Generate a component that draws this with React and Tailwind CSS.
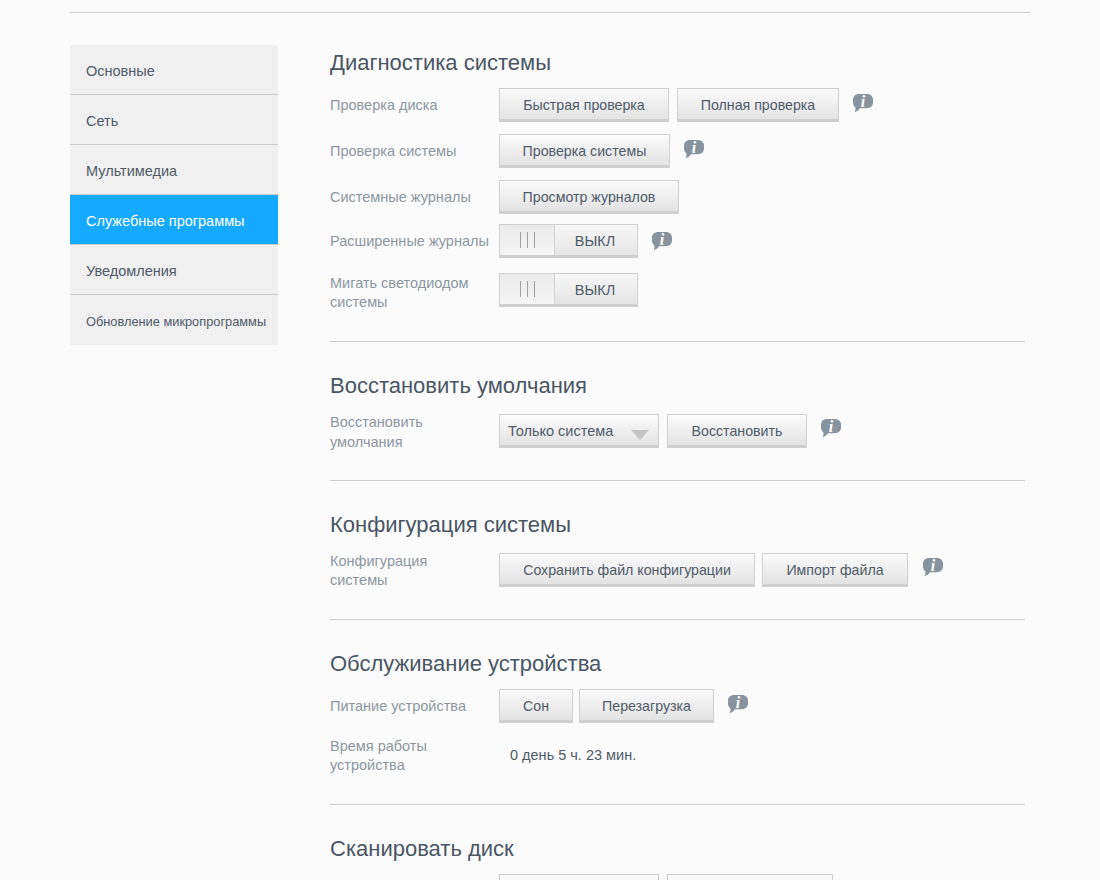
import React from 'react';

const NAV = [
    { label: 'Основные' },
    { label: 'Сеть' },
    { label: 'Мультимедиа' },
    { label: 'Служебные программы', active: true },
    { label: 'Уведомления' },
    { label: 'Обновление микропрограммы', small: true },
];

function InfoIcon({ className = '' }) {
    return (
        <svg width="20" height="19" viewBox="0 0 20 19" className={`overflow-visible ${className}`}>
            <path d="M6 0H14C17.5 0 20 2.4 20 5.5V8.5C20 11.8 17.5 14.2 14 14.2H7C5.8 16 4 17.6 1.5 18.2C2.4 16.8 2.6 15.2 2.4 13.4C0.9 12.2 0 10.4 0 8.5V5.5C0 2.4 2.5 0 6 0Z" fill="#8794a0" />
            <text x="10" y="12.5" textAnchor="middle" fontFamily="'Liberation Serif', serif" fontSize="16" fontWeight="700" fontStyle="italic" fill="#ffffff">i</text>
        </svg>
    );
}

function Btn({ children, className = '' }) {
    return (
        <button className={`h-[34px] pt-[4px] border border-[#cfcfcf] border-b-[3px] bg-gradient-to-b from-[#fbfbfb] to-[#e3e3e3] text-[14.2px] text-[#505a68] whitespace-nowrap ${className}`}>
            {children}
        </button>
    );
}

function Toggle() {
    return (
        <div className="flex w-[139px] h-[34px] border border-[#cfcfcf] border-b-[3px] bg-gradient-to-b from-[#f7f7f7] to-[#e5e5e5] text-[14.5px] text-[#505a68]">
            <div className="w-[55px] flex items-center justify-center gap-[6px] border-r border-[#d4d4d4] bg-gradient-to-b from-[#eaeaea] to-[#f6f6f6]">
                <span className="w-px h-[16px] bg-[#a0a0a0]" />
                <span className="w-px h-[16px] bg-[#a0a0a0]" />
                <span className="w-px h-[16px] bg-[#a0a0a0]" />
            </div>
            <div className="flex-1 flex items-center justify-center pt-[4px] pr-[2px]">ВЫКЛ</div>
        </div>
    );
}

function Select({ children, className = '' }) {
    return (
        <div className={`relative w-[160px] h-[34px] pl-2 pt-[4px] flex items-center border border-[#cfcfcf] border-b-[3px] bg-gradient-to-b from-[#fbfbfb] to-[#e3e3e3] text-[14.5px] text-[#505a68] ${className}`}>
            {children}
            {children && <span className="absolute left-[131px] top-[15px] w-0 h-0 border-x-[9px] border-x-transparent border-t-[10px] border-t-[#c4c4c4]" />}
        </div>
    );
}

function Row({ label, labelClass = 'mt-[8px] leading-[19px]', children, className = '' }) {
    return (
        <div className={`flex items-start ${className}`}>
            <div className={`w-[169px] text-[14.5px] text-[#8c96a0] ${labelClass}`}>{label}</div>
            <div className="flex items-start gap-2">{children}</div>
        </div>
    );
}

function Heading({ children, className = '' }) {
    return <h2 className={`text-[22px] leading-7 text-[#4a5563] ${className}`}>{children}</h2>;
}

export default function App() {
    return (
        <div className="h-[880px] overflow-hidden bg-[#fbfbfb] font-['Liberation_Sans',Arial,sans-serif]">
            <div className="mx-[70px] pt-3">
                <div className="border-t border-[#cccccc]" />
                <div className="flex mt-8">
                    <nav className="w-[208px] shrink-0 self-start">
                        {NAV.map((item, i) => (
                            <div
                                key={item.label}
                                className={`h-[50px] flex items-center pl-4 ${item.small ? 'pt-[4px]' : 'pt-[4px]'} ${i < NAV.length - 1 ? 'border-b border-[#cccccc]' : ''} ${item.active ? 'bg-[#15aaff] text-white' : 'bg-[#f0f0f0] text-[#505a68]'} ${item.small ? 'text-[12.8px]' : 'text-[14.5px]'}`}
                            >
                                {item.label}
                            </div>
                        ))}
                    </nav>

                    <main className="ml-[52px] w-[695px] pt-[4px]">
                        <Heading>Диагностика системы</Heading>
                        <Row label="Проверка диска" className="mt-[11px]">
                            <Btn className="w-[170px]">Быстрая проверка</Btn>
                            <Btn className="w-[162px]">Полная проверка</Btn>
                            <InfoIcon className="ml-[6px] mt-[6px]" />
                        </Row>
                        <Row label="Проверка системы" className="mt-[12px]">
                            <Btn className="w-[171px]">Проверка системы</Btn>
                            <InfoIcon className="ml-[6px] mt-[6px]" />
                        </Row>
                        <Row label="Системные журналы" className="mt-[12px]">
                            <Btn className="w-[180px]">Просмотр журналов</Btn>
                        </Row>
                        <Row label="Расширенные журналы" className="mt-[10px]">
                            <Toggle />
                            <InfoIcon className="ml-[6px] mt-[8px]" />
                        </Row>
                        <Row label={<>Мигать светодиодом<br />системы</>} labelClass="mt-px leading-[19px]" className="mt-[15px]">
                            <Toggle />
                        </Row>
                        <div className="border-t border-[#cccccc] mt-[29px]" />

                        <Heading className="mt-[30px]">Восстановить умолчания</Heading>
                        <Row label={<>Восстановить<br />умолчания</>} labelClass="-mt-[2px] leading-[20px]" className="mt-[14px]">
                            <Select>Только система</Select>
                            <Btn className="w-[140px]">Восстановить</Btn>
                            <InfoIcon className="ml-[6px] mt-[5px]" />
                        </Row>
                        <div className="border-t border-[#cccccc] mt-[28px]" />

                        <Heading className="mt-[30px]">Конфигурация системы</Heading>
                        <Row label={<>Конфигурация<br />системы</>} labelClass="-mt-px leading-[19px]" className="mt-[14px]">
                            <Btn className="w-[256px]">Сохранить файл конфигурации</Btn>
                            <Btn className="w-[146px] -ml-px">Импорт файла</Btn>
                            <InfoIcon className="ml-[7px] mt-[5px]" />
                        </Row>
                        <div className="border-t border-[#cccccc] mt-[29px]" />

                        <Heading className="mt-[30px]">Обслуживание устройства</Heading>
                        <Row label="Питание устройства" className="mt-[11px]">
                            <Btn className="w-[74px]">Сон</Btn>
                            <Btn className="w-[135px] -ml-[2px]">Перезагрузка</Btn>
                            <InfoIcon className="ml-[6px] mt-[6px]" />
                        </Row>
                        <Row label={<>Время работы<br />устройства</>} labelClass="mt-[5px] leading-[19px]" className="mt-[9px]">
                            <div className="pl-[11px] pt-[14px] text-[14.5px] leading-[19px] text-[#505a68]">0 день 5 ч. 23 мин.</div>
                        </Row>
                        <div className="border-t border-[#cccccc] mt-[29px]" />

                        <Heading className="mt-[30px]">Сканировать диск</Heading>
                        <Row label="" className="mt-[11px]">
                            <Select />
                            <Btn className="w-[166px]" />
                        </Row>
                    </main>
                </div>
            </div>
        </div>
    );
}
